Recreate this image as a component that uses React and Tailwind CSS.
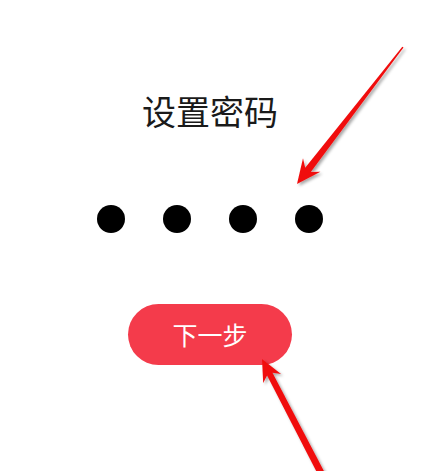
export default function App() {
  return (
    <div
      className="relative h-[471px] w-[439px] overflow-hidden bg-white"
      style={{ fontFamily: '"Noto Sans CJK SC", "Noto Sans", sans-serif' }}
    >
      <div className="flex w-[420px] flex-col items-center">
        <h1 className="mt-[94px] text-[34px] leading-[34px] font-normal text-[#1a1a1a]">设置密码</h1>
        <div className="mt-[77px] flex gap-[38px]">
          <span className="h-[28px] w-[28px] rounded-full bg-black" />
          <span className="h-[28px] w-[28px] rounded-full bg-black" />
          <span className="h-[28px] w-[28px] rounded-full bg-black" />
          <span className="h-[28px] w-[28px] rounded-full bg-black" />
        </div>
        <button
          type="button"
          className="mt-[71px] flex h-[61px] w-[164px] items-center justify-center rounded-full bg-[#f43b4b] text-[25px] leading-none text-white"
        >
          下一步
        </button>
      </div>

      {/* annotation arrows drawn over the screenshot */}
      <svg className="pointer-events-none absolute inset-0" width="439" height="471" viewBox="0 0 439 471">
        <defs>
          <filter id="shadow" x="-20%" y="-20%" width="140%" height="140%">
            <feDropShadow dx="2" dy="2" stdDeviation="1.5" floodColor="#000" floodOpacity="0.35" />
          </filter>
        </defs>
        <polygon
          filter="url(#shadow)"
          fill="#f01010"
          points="297,184 320.4,171.7 310.8,171.9 403.5,47.6 402.3,46.8 305.2,167.7 303,158.3"
        />
        <polygon
          filter="url(#shadow)"
          fill="#f01010"
          points="262,359 281,373.9 272.5,372.7 329.5,481.7 323.3,484.9 267.1,375.5 263.2,383.1"
        />
      </svg>
    </div>
  )
}
